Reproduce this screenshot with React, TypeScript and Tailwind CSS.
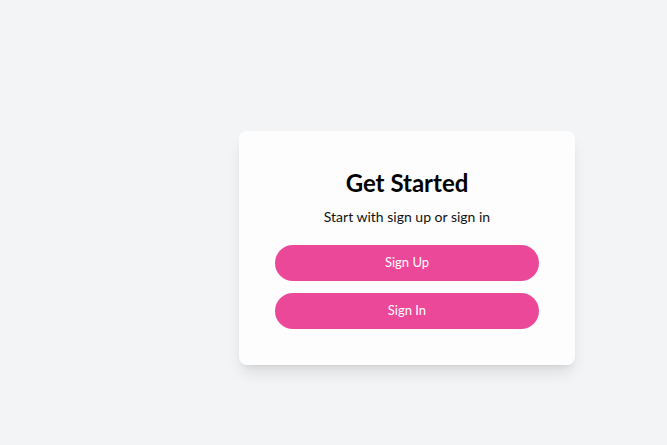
export default function App() {
  return (
    <div
      className="min-h-screen bg-[#f3f4f6] pl-[239px] pt-[131px]"
      style={{ fontFamily: 'Lato, "Open Sans", sans-serif' }}
    >
      <div className="w-[336px] rounded-lg bg-[#fdfdfd] p-9 text-center shadow-lg">
        <h1 className="text-2xl leading-8 font-bold text-black">Get Started</h1>
        <p className="mt-2 text-sm leading-5 text-[#111]">Start with sign up or sign in</p>
        <div className="mt-[18px] flex flex-col gap-3">
          <button className="h-9 w-full rounded-full bg-[#ec4899] text-[13px] text-white">
            Sign Up
          </button>
          <button className="h-9 w-full rounded-full bg-[#ec4899] text-[13px] text-white">
            Sign In
          </button>
        </div>
      </div>
    </div>
  );
}
